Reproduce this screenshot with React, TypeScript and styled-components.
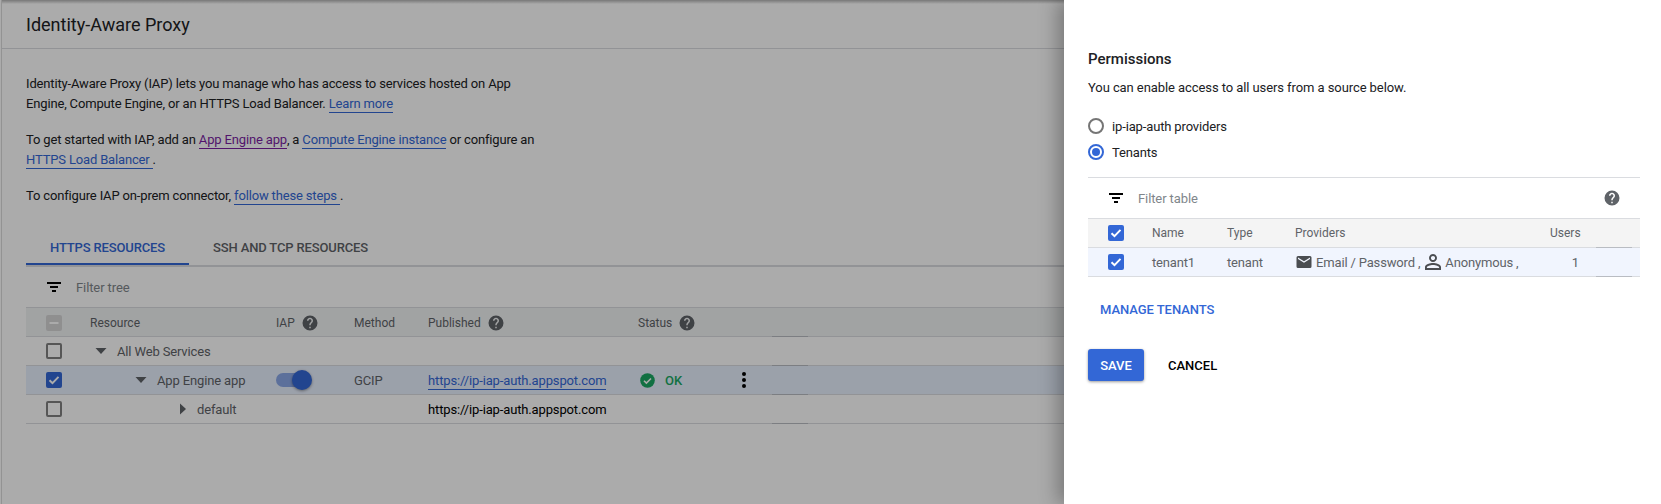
import React from "react";
import styled, { createGlobalStyle } from "styled-components";

const Global = createGlobalStyle`
  html, body { margin: 0; padding: 0; background: #fff; }
  body { font-family: Roboto, "Liberation Sans", sans-serif; color: #000; font-size: 13px; }
  * { box-sizing: border-box; }
`;

const Page = styled.div`
  position: relative;
  width: 1661px;
  height: 504px;
  overflow: hidden;
  background: #fff;
`;
const Main = styled.main`
  height: 504px;
  margin-left: 1px;
  border-left: 1px solid #dcdcdc;
  background: linear-gradient(rgba(0, 0, 0, 0.3), rgba(0, 0, 0, 0) 4px);
`;
const Header = styled.header`
  height: 49px;
  display: flex;
  align-items: center;
  padding-left: 24px;
  border-bottom: 1px solid #dadce0;
`;
const Title = styled.h1`
  margin: 0;
  font-size: 18px;
  font-weight: 400;
  color: #202124;
`;
const Intro = styled.div`
  padding: 25px 0 0 24px;
  width: 536px;
`;
const Para = styled.p`
  margin: 0 0 16px;
  font-size: 13px;
  line-height: 20px;
  letter-spacing: -0.16px;
  color: #202124;
`;
const Link = styled.a<{ $visited?: boolean }>`
  color: ${(p) => (p.$visited ? "#7b1fa2" : "#3367d6")};
  border-bottom: 1px solid ${(p) => (p.$visited ? "#7b1fa2" : "#3367d6")};
  padding-bottom: 1px;
`;
const Tabs = styled.div`
  display: flex;
  margin: 23px 0 0 24px;
  height: 38px;
  border-bottom: 2px solid #dadce0;
`;
const Tab = styled.div<{ $active?: boolean }>`
  padding: 0 24px;
  height: 36px;
  line-height: 38px;
  font-size: 13px;
  font-weight: 500;
  letter-spacing: -0.14px;
  color: ${(p) => (p.$active ? "#3367d6" : "#5f6368")};
  border-bottom: ${(p) => (p.$active ? "2px solid #3367d6" : "none")};
`;
const FilterBar = styled.div<{ $pl: number; $pr?: number }>`
  height: 40px;
  display: flex;
  align-items: center;
  padding-left: ${(p) => p.$pl}px;
  padding-right: ${(p) => p.$pr ?? 0}px;
  gap: 13px;
  font-size: 13px;
  letter-spacing: -0.1px;
  color: #80868b;
`;
const TreeTable = styled.div`
  margin-left: 24px;
`;
const TreeRow = styled.div<{ $head?: boolean; $selected?: boolean }>`
  display: grid;
  grid-template-columns: 64px 186px 78px 74px 210px 134px 36px 1fr;
  height: ${(p) => (p.$head ? 30 : 29)}px;
  align-items: center;
  border-bottom: 1px solid #dadce0;
  font-size: ${(p) => (p.$head ? 12 : 13)}px;
  letter-spacing: ${(p) => (p.$head ? 0 : -0.14)}px;
  color: #5f6368;
  background: ${(p) => (p.$head ? "#f1f3f4" : p.$selected ? "#e8f0fe" : "transparent")};
  ${(p) => (p.$head ? "border-top: 1px solid #dadce0; padding-top: 2px;" : "")}
`;
const Tail = styled.div`
  align-self: end;
  height: 1px;
  margin-bottom: -1px;
  background: #b9bcc2;
`;
const CheckCell = styled.div`
  display: flex;
  padding-left: 20px;
`;
const Box = styled.span<{ $variant: "on" | "off" | "mixed" }>`
  width: 16px;
  height: 16px;
  border-radius: 2px;
  display: inline-flex;
  align-items: center;
  justify-content: center;
  ${(p) =>
    p.$variant === "on"
      ? "background:#3367d6;"
      : p.$variant === "mixed"
      ? "background:#d6d6d6;"
      : "border:2px solid #808080;"}
`;
const Indent = styled.div<{ $n: number }>`
  display: flex;
  align-items: center;
  gap: 10px;
  padding-left: ${(p) => p.$n}px;
  white-space: nowrap;
`;
const HeadLabel = styled.div`
  display: flex;
  align-items: center;
  gap: 6px;
`;
const Help = styled.svg`
  width: 18px;
  height: 18px;
  fill: #5f6368;
  display: block;
`;
const Toggle = styled.span`
  position: relative;
  display: block;
  width: 34px;
  height: 14px;
  border-radius: 7px;
  background: #8aa8e8;
`;
const Knob = styled.span`
  position: absolute;
  right: -2px;
  top: -3px;
  width: 20px;
  height: 20px;
  border-radius: 50%;
  background: #3367d6;
  box-shadow: 0 1px 3px rgba(0, 0, 0, 0.4);
`;
const Plain = styled.span`
  color: #000;
  white-space: nowrap;
`;
const StatusCell = styled.div`
  display: flex;
  align-items: center;
  gap: 10px;
  padding-left: 2px;
  color: #1aa863;
  font-weight: 500;
  letter-spacing: 0;
  position: relative;
`;
const Kebab = styled.svg`
  position: absolute;
  left: 94px;
  top: 50%;
  margin-top: -12px;
  width: 24px;
  height: 24px;
  fill: #000;
`;
const Backdrop = styled.div`
  position: absolute;
  inset: 0;
  background: rgba(0, 0, 0, 0.33);
`;
const Panel = styled.aside`
  position: absolute;
  top: 0;
  right: 0;
  bottom: 0;
  width: 597px;
  background: #fff;
  padding: 49px 0 0 24px;
  box-shadow: -6px 0 18px rgba(0, 0, 0, 0.3);
`;
const PanelTitle = styled.h2`
  margin: 0;
  font-size: 15px;
  line-height: 20px;
  font-weight: 500;
  color: #202124;
`;
const PanelText = styled.p`
  margin: 9px 0 0;
  font-size: 13px;
  line-height: 20px;
  letter-spacing: -0.08px;
  color: #202124;
`;
const Radios = styled.div`
  margin-top: 18px;
  display: flex;
  flex-direction: column;
  gap: 6px;
`;
const RadioRow = styled.div`
  display: flex;
  align-items: center;
  gap: 8px;
  height: 20px;
  font-size: 13px;
  letter-spacing: -0.14px;
  color: #202124;
`;
const Radio = styled.span<{ $on?: boolean }>`
  width: 16px;
  height: 16px;
  border-radius: 50%;
  border: 2px solid ${(p) => (p.$on ? "#3367d6" : "#757575")};
  display: inline-flex;
  align-items: center;
  justify-content: center;
  &::after {
    content: "";
    width: 8px;
    height: 8px;
    border-radius: 50%;
    background: ${(p) => (p.$on ? "#3367d6" : "transparent")};
  }
`;
const TenantBox = styled.div`
  margin-top: 15px;
  width: 552px;
  border-top: 1px solid #dadce0;
`;
const Spacer = styled.div`
  flex: 1;
`;
const TenantRow = styled.div<{ $head?: boolean }>`
  display: grid;
  grid-template-columns: 64px 75px 68px 255px 30px 16px 36px 1fr;
  height: ${(p) => (p.$head ? 30 : 29)}px;
  align-items: center;
  border-bottom: 1px solid #dadce0;
  font-size: ${(p) => (p.$head ? 12 : 13)}px;
  letter-spacing: ${(p) => (p.$head ? 0 : -0.16)}px;
  color: #5f6368;
  background: ${(p) => (p.$head ? "#f4f4f4" : "#f1f5fe")};
  ${(p) => (p.$head ? "border-top: 1px solid #dadce0;" : "")}
`;
const ProviderCell = styled.div`
  display: flex;
  align-items: center;
  gap: 1px;
  white-space: nowrap;
`;
const MailIcon = styled.svg`
  width: 18px;
  height: 18px;
  margin-right: 2px;
  fill: #4a4d51;
`;
const PersonIcon = styled.svg`
  width: 24px;
  height: 24px;
  margin-right: -1px;
  fill: #4a4d51;
`;
const Num = styled.div<{ $pr?: number }>`
  text-align: right;
  padding-right: ${(p) => p.$pr ?? 0}px;
`;
const ManageLink = styled.div`
  margin: 23px 0 0 12px;
  font-size: 13px;
  line-height: 20px;
  font-weight: 500;
  letter-spacing: -0.05px;
  color: #3367d6;
`;
const Actions = styled.div`
  margin-top: 29px;
  display: flex;
  align-items: center;
  gap: 24px;
`;
const Save = styled.button`
  width: 56px;
  height: 32px;
  padding: 0;
  border: 0;
  border-radius: 3px;
  background: #3367d6;
  color: #fff;
  font: 500 13px Roboto, sans-serif;
  box-shadow: 0 1px 3px rgba(0, 0, 0, 0.4);
`;
const Cancel = styled.button`
  border: 0;
  background: transparent;
  color: #000;
  padding: 0;
  font: 500 13px Roboto, sans-serif;
`;

const Q = () => (
  <Help viewBox="0 0 24 24"><path d="M12 2a10 10 0 1 0 0 20 10 10 0 0 0 0-20zm1 17h-2v-2h2v2zm2.07-7.75-.9.92C13.45 12.9 13 13.5 13 15h-2v-.5c0-1.1.45-2.1 1.17-2.83l1.24-1.26c.37-.36.59-.86.59-1.41 0-1.1-.9-2-2-2s-2 .9-2 2H8c0-2.21 1.79-4 4-4s4 1.79 4 4c0 .88-.36 1.68-.93 2.25z"/></Help>
);
const FilterIcon = () => (
  <svg width="18" height="18" viewBox="0 0 18 18"><path d="M2 4h14v2H2zM5 8h8v2H5zM7 12h4v2H7z" fill="#000"/></svg>
);
const Tick = () => (
  <svg width="16" height="16" viewBox="0 0 16 16"><path d="M3.5 8.2l3 2.9 6-6.2" stroke="#fff" strokeWidth="2" fill="none"/></svg>
);
const Caret = ({ right }: { right?: boolean }) => (
  <svg width="12" height="12" viewBox="0 0 12 12"><path d={right ? "M5 .5l6 5.5-6 5.5z" : "M.5 3h11L6 9z"} fill="#5f6368"/></svg>
);

export default function App() {
  return (
    <Page>
      <Global />
      <Main>
        <Header><Title>Identity-Aware Proxy</Title></Header>
        <Intro>
          <Para>Identity-Aware Proxy (IAP) lets you manage who has access to services hosted on App Engine, Compute Engine, or an HTTPS Load Balancer. <Link>Learn more</Link></Para>
          <Para>To get started with IAP, add an <Link $visited>App Engine app</Link>, a <Link>Compute Engine instance</Link> or configure an <Link>HTTPS Load Balancer </Link>.</Para>
          <Para>To configure IAP on-prem connector, <Link>follow these steps </Link>.</Para>
        </Intro>
        <Tabs>
          <Tab $active>HTTPS RESOURCES</Tab>
          <Tab>SSH AND TCP RESOURCES</Tab>
        </Tabs>
        <FilterBar $pl={43}>
          <FilterIcon /><span>Filter tree</span>
        </FilterBar>
        <TreeTable>
          <TreeRow $head>
            <CheckCell><Box $variant="mixed"><svg width="12" height="12" viewBox="0 0 12 12"><path d="M1.5 5h9v2h-9z" fill="#fff"/></svg></Box></CheckCell>
            <div>Resource</div>
            <HeadLabel>IAP <Q /></HeadLabel>
            <div>Method</div>
            <HeadLabel>Published <Q /></HeadLabel>
            <HeadLabel>Status <Q /></HeadLabel>
            <Tail />
          </TreeRow>
          <TreeRow>
            <CheckCell><Box $variant="off" /></CheckCell>
            <Indent $n={5}><Caret />All Web Services</Indent>
            <div /><div /><div /><div />
            <Tail />
          </TreeRow>
          <TreeRow $selected>
            <CheckCell><Box $variant="on"><Tick /></Box></CheckCell>
            <Indent $n={45}><Caret />App Engine app</Indent>
            <div><Toggle><Knob /></Toggle></div>
            <div>GCIP</div>
            <div><Link>https://ip-iap-auth.appspot.com</Link></div>
            <StatusCell>
              <svg width="15" height="15" viewBox="0 0 15 15"><circle cx="7.5" cy="7.5" r="7.3" fill="#1aa863"/><path d="M4 7.7l2.4 2.4 4.6-4.6" stroke="#fff" strokeWidth="1.6" fill="none"/></svg>
              OK
              <Kebab viewBox="0 0 24 24"><path d="M12 8a2 2 0 1 0 0-4 2 2 0 0 0 0 4zm0 2a2 2 0 1 0 0 4 2 2 0 0 0 0-4zm0 6a2 2 0 1 0 0 4 2 2 0 0 0 0-4z"/></Kebab>
            </StatusCell>
            <Tail />
          </TreeRow>
          <TreeRow>
            <CheckCell><Box $variant="off" /></CheckCell>
            <Indent $n={85}><Caret right />default</Indent>
            <div /><div />
            <Plain>https://ip-iap-auth.appspot.com</Plain>
            <div />
            <Tail />
          </TreeRow>
        </TreeTable>
      </Main>
      <Backdrop />
      <Panel>
        <PanelTitle>Permissions</PanelTitle>
        <PanelText>You can enable access to all users from a source below.</PanelText>
        <Radios>
          <RadioRow><Radio />ip-iap-auth providers</RadioRow>
          <RadioRow><Radio $on />Tenants</RadioRow>
        </Radios>
        <TenantBox>
          <FilterBar $pl={19} $pr={19}>
            <FilterIcon /><span>Filter table</span><Spacer />
            <Q />
          </FilterBar>
          <TenantRow $head>
            <CheckCell><Box $variant="on"><Tick /></Box></CheckCell>
            <div>Name</div><div>Type</div><div>Providers</div><Num>Users</Num><div />
            <Tail />
          </TenantRow>
          <TenantRow>
            <CheckCell><Box $variant="on"><Tick /></Box></CheckCell>
            <div>tenant1</div><div>tenant</div>
            <ProviderCell>
              <MailIcon viewBox="0 0 24 24"><path d="M20 4H4a2 2 0 0 0-2 2v12a2 2 0 0 0 2 2h16a2 2 0 0 0 2-2V6a2 2 0 0 0-2-2zm0 4-8 5-8-5V6l8 5 8-5v2z"/></MailIcon>
              Email / Password ,
              <PersonIcon viewBox="0 0 24 24"><path d="M12 5.9c1.16 0 2.1.94 2.1 2.1s-.94 2.1-2.1 2.1S9.9 9.16 9.9 8s.94-2.1 2.1-2.1m0 9c2.97 0 6.1 1.46 6.1 2.1v1.1H5.9V17c0-.64 3.13-2.1 6.1-2.1M12 4C9.79 4 8 5.79 8 8s1.79 4 4 4 4-1.79 4-4-1.79-4-4-4zm0 9c-2.67 0-8 1.34-8 4v3h16v-3c0-2.66-5.33-4-8-4z"/></PersonIcon>
              Anonymous ,
            </ProviderCell>
            <Num $pr={1}>1</Num><div />
            <Tail />
          </TenantRow>
        </TenantBox>
        <ManageLink>MANAGE TENANTS</ManageLink>
        <Actions><Save>SAVE</Save><Cancel>CANCEL</Cancel></Actions>
      </Panel>
    </Page>
  );
}
